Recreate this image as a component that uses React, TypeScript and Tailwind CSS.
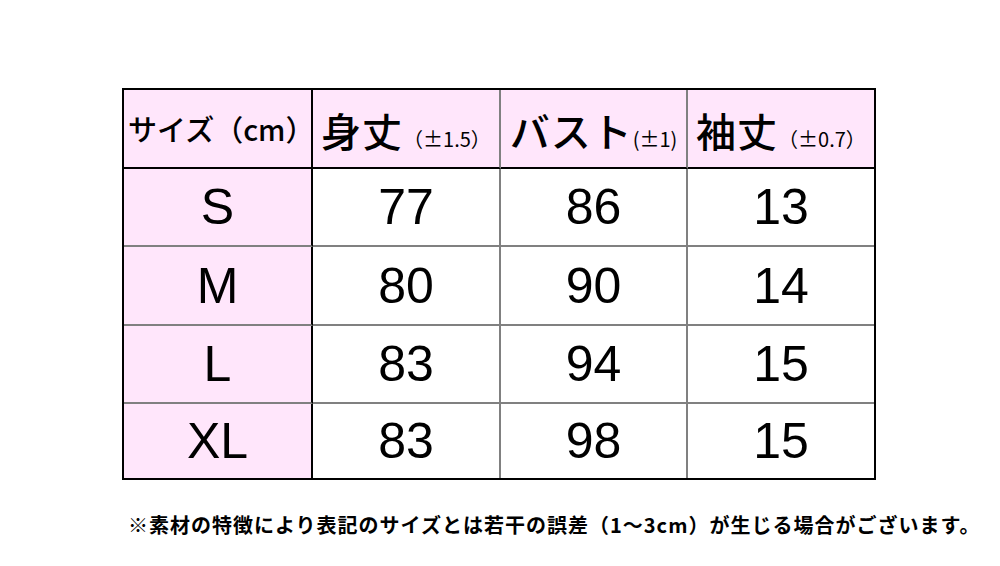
import React from "react";

const jp = '"Noto Sans CJK JP", "Noto Sans", sans-serif';
const num = '"Liberation Sans", Arial, sans-serif';

const rows = [
  { size: "S", body: "77", bust: "86", sleeve: "13" },
  { size: "M", body: "80", bust: "90", sleeve: "14" },
  { size: "L", body: "83", bust: "94", sleeve: "15" },
  { size: "XL", body: "83", bust: "98", sleeve: "15" },
];

const rowHeights = ["h-[78px]", "h-[79px]", "h-[78px]", "h-[74px]"];

function HeadCell({ main, note, last, first }: { main: string; note?: string; last?: boolean; first?: boolean }) {
  return (
    <div
      className={`h-[79px] bg-[#ffe6fb] border-b-2 border-black flex items-center justify-center ${
        last ? "" : first ? "border-r-2 border-r-black" : "border-r-2 border-r-[#808080]"
      }`}
      style={{ fontFamily: jp }}
    >
      {first ? (
        <span className="text-[29px] font-medium leading-none pl-[4px]">{main}</span>
      ) : (
        <span className="flex items-baseline leading-none pt-[2px]">
          <span className="text-[40px] font-medium tracking-[1px]">{main}</span>
          <span className="text-[20px] font-normal">{note}</span>
        </span>
      )}
    </div>
  );
}

export default function App() {
  return (
    <div className="w-[1000px] h-[566px] bg-white overflow-hidden text-black">
      <div className="pt-[88px] pl-[122px]">
        <div className="w-[754px] border-2 border-black grid grid-cols-[189px_188px_187px_186px]">
          <HeadCell main="サイズ（cm）" first />
          <HeadCell main="身丈" note="（±1.5）" />
          <HeadCell main="バスト" note="(±1)" />
          <HeadCell main="袖丈" note="（±0.7）" last />

          {rows.map((r, i) => {
            const h = rowHeights[i];
            const bottom = i < rows.length - 1 ? "border-b-2 border-b-[#808080]" : "";
            return (
              <React.Fragment key={r.size}>
                <div
                  className={`${h} ${bottom} bg-[#ffe6fb] border-r-2 border-r-black flex items-center justify-center text-[50px] leading-none`}
                  style={{ fontFamily: num }}
                >
                  {r.size}
                </div>
                <div
                  className={`${h} ${bottom} border-r-2 border-r-[#808080] flex items-center justify-center text-[50px] leading-none`}
                  style={{ fontFamily: num }}
                >
                  {r.body}
                </div>
                <div
                  className={`${h} ${bottom} border-r-2 border-r-[#808080] flex items-center justify-center text-[50px] leading-none`}
                  style={{ fontFamily: num }}
                >
                  {r.bust}
                </div>
                <div
                  className={`${h} ${bottom} flex items-center justify-center text-[50px] leading-none`}
                  style={{ fontFamily: num }}
                >
                  {r.sleeve}
                </div>
              </React.Fragment>
            );
          })}
        </div>
      </div>

      {/* 注意書き */}
      <p
        className="mt-[35px] ml-[128px] text-[20px] font-bold tracking-[1px] leading-none whitespace-nowrap"
        style={{ fontFamily: jp }}
      >
        ※素材の特徴により表記のサイズとは若干の誤差（1～3cm）が生じる場合がございます。
      </p>
    </div>
  );
}
